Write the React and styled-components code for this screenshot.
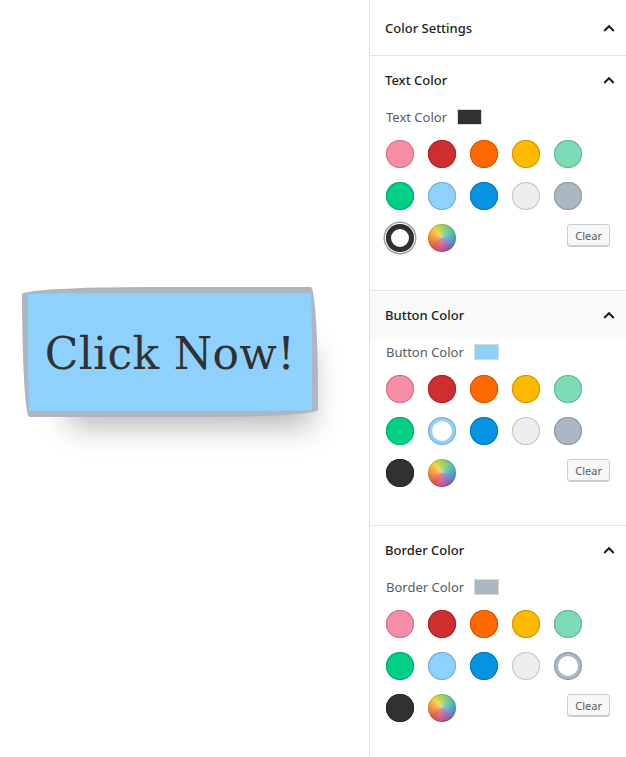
import React from 'react';
import styled, { createGlobalStyle } from 'styled-components';

const Global = createGlobalStyle`
  html, body { margin: 0; padding: 0; background: #fff; }
  body { font-family: "Noto Sans", "Open Sans", sans-serif; }
`;

const PALETTE = [
  '#f78da7', '#cf2e2e', '#ff6900', '#fcb900', '#7bdcb5',
  '#00d084', '#8ed1fc', '#0693e3', '#eeeeee', '#abb8c3',
  '#313131',
];

const Page = styled.div`
  display: flex;
  height: 757px;
  overflow: hidden;
`;

const Canvas = styled.main`
  width: 369px;
  flex-shrink: 0;
  box-sizing: border-box;
  padding: 287px 0 0 22px;
`;

const HandButton = styled.button`
  width: 296px;
  height: 130px;
  box-sizing: border-box;
  padding: 3px 0 0 0;
  border: 6px solid #abb8c3;
  background: #8ed1fc;
  color: #313131;
  font-family: "DejaVu Serif", serif;
  font-size: 44px;
  letter-spacing: 0.3px;
  border-radius: 255px 15px 225px 15px / 15px 225px 15px 255px;
  box-shadow: 20px 36px 30px -26px rgba(0, 0, 0, 0.28);
  display: flex;
  align-items: center;
  justify-content: center;
`;

const Sidebar = styled.aside`
  flex: 1;
  border-left: 1px solid #e2e4e7;
`;

const HeaderBase = styled.div`
  display: flex;
  align-items: center;
  justify-content: space-between;
  padding: 0 11px 0 15px;
  font-size: 13px;
  font-weight: 500;
  color: #191e23;
`;

const TopHeader = styled(HeaderBase)`
  height: 55px;
  border-bottom: 1px solid #e2e4e7;
`;

const Panel = styled.section`
  border-top: ${(p) => (p.$first ? 'none' : '1px solid #e2e4e7')};
`;

const PanelHeader = styled(HeaderBase)`
  height: 48px;
  background: ${(p) => (p.$active ? '#f8f9f9' : 'transparent')};
`;

const PanelBody = styled.div`
  padding: 3px 16px 38px 16px;
`;

const LabelRow = styled.div`
  height: 20px;
  display: flex;
  align-items: center;
  font-size: 13px;
  color: #555d66;
`;

const Indicator = styled.span`
  width: 25px;
  height: 16px;
  box-sizing: border-box;
  margin-left: 10px;
  border: 1px solid #dadada;
  background: ${(p) => p.$color};
`;

const Palette = styled.div`
  margin-top: 13px;
  display: flex;
  flex-wrap: wrap;
  gap: 14px;
`;

const Swatch = styled.button`
  width: 28px;
  height: 28px;
  padding: 0;
  border: none;
  border-radius: 50%;
  position: relative;
  cursor: pointer;
  background: ${(p) => (p.$selected ? '#fff' : p.$color)};
  box-shadow: ${(p) =>
    p.$focus
      ? `inset 0 0 0 5px ${p.$color}, 0 0 0 1px #fff, 0 0 0 2.5px #9ca3aa`
      : `inset 0 0 0 ${p.$selected ? '4px' : '14px'} ${p.$color}`};
  &::after {
    content: "";
    position: absolute;
    inset: 0;
    border-radius: 50%;
    box-shadow: inset 0 0 0 1px rgba(0, 0, 0, 0.18);
  }
`;

const CustomSwatch = styled.button`
  width: 28px;
  height: 28px;
  padding: 0;
  border: none;
  border-radius: 50%;
  cursor: pointer;
  background:
    radial-gradient(circle, rgba(255, 255, 255, 0.35) 0%, rgba(255, 255, 255, 0) 65%),
    conic-gradient(from 0deg, #9fcf4e, #49bfa6 60deg, #4f8fc9 105deg, #8a5ca6 145deg,
      #c9508a 185deg, #e2533d 225deg, #f08f2f 270deg, #f1cf3c 320deg, #9fcf4e);
  box-shadow: inset 0 0 0 1px rgba(0, 0, 0, 0.12);
`;

const ClearButton = styled.button`
  margin-left: auto;
  align-self: flex-start;
  height: 23px;
  padding: 0 7px;
  font-family: "Noto Sans", sans-serif;
  font-size: 11px;
  color: #555d66;
  background: #f7f7f7;
  border: 1px solid #cccccc;
  border-radius: 3px;
  box-shadow: inset 0 -1px 0 #cccccc;
  cursor: pointer;
`;

const Chevron = () => (
  <svg width="12" height="8" viewBox="0 0 12 8" aria-hidden="true">
    <path d="M1.2 7 L6 2.2 L10.8 7" fill="none" stroke="#191e23" strokeWidth="2" />
  </svg>
);

const PANELS = [
  { title: 'Text Color', value: '#313131', selected: '#313131', focus: true },
  { title: 'Button Color', value: '#8ed1fc', selected: '#8ed1fc', active: true },
  { title: 'Border Color', value: '#abb8c3', selected: '#abb8c3' },
];

export default function App() {
  return (
    <Page>
      <Global />
      <Canvas>
        <HandButton>Click Now!</HandButton>
      </Canvas>
      <Sidebar>
        <TopHeader>
          <span>Color Settings</span>
          <Chevron />
        </TopHeader>
        {PANELS.map((panel, i) => (
          <Panel key={panel.title} $first={i === 0}>
            <PanelHeader $active={panel.active}>
              <span>{panel.title}</span>
              <Chevron />
            </PanelHeader>
            <PanelBody>
              <LabelRow>
                {panel.title}
                <Indicator $color={panel.value} />
              </LabelRow>
              <Palette>
                {PALETTE.map((c) => (
                  <Swatch
                    key={c}
                    $color={c}
                    $selected={c === panel.selected}
                    $focus={c === panel.selected && panel.focus}
                    aria-label={c}
                  />
                ))}
                <CustomSwatch aria-label="Custom color" />
                <ClearButton>Clear</ClearButton>
              </Palette>
            </PanelBody>
          </Panel>
        ))}
      </Sidebar>
    </Page>
  );
}
